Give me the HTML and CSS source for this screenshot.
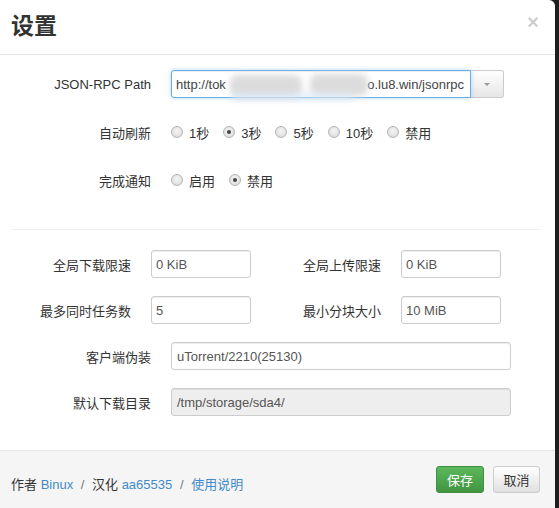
FILE: index.html
```html
<!DOCTYPE html>
<html lang="zh">
<head>
<meta charset="utf-8">
<title>设置</title>
<link rel="stylesheet" href="styles.css">
</head>
<body>
<div class="modal">
  <div class="modal-header">
    <h3 class="title">设置</h3>
    <span class="close">×</span>
  </div>
  <div class="modal-body">
    <div class="row">
      <label class="lbl">JSON-RPC Path</label>
      <div class="input-group">
        <div class="input rpc focused">
          <span>http://tok</span>
          <span>o.lu8.win/jsonrpc</span>
          <span class="blur b1"></span>
          <span class="blur b2"></span>
          <span class="glow"></span>
        </div>
        <div class="addon"><span class="caret"></span></div>
      </div>
    </div>
    <div class="row r-radio">
      <label class="lbl">自动刷新</label>
      <div class="radios">
        <span class="opt"><span class="radio"></span>1秒</span>
        <span class="opt"><span class="radio checked"></span>3秒</span>
        <span class="opt"><span class="radio"></span>5秒</span>
        <span class="opt"><span class="radio"></span>10秒</span>
        <span class="opt"><span class="radio"></span>禁用</span>
      </div>
    </div>
    <div class="row r-radio2">
      <label class="lbl">完成通知</label>
      <div class="radios">
        <span class="opt"><span class="radio"></span>启用</span>
        <span class="opt"><span class="radio checked"></span>禁用</span>
      </div>
    </div>
    <hr class="divider">
    <div class="row r-two">
      <label class="lbl lbl-s">全局下载限速</label>
      <div class="input small">0 KiB</div>
      <label class="lbl lbl-m">全局上传限速</label>
      <div class="input small">0 KiB</div>
    </div>
    <div class="row r-two">
      <label class="lbl lbl-s">最多同时任务数</label>
      <div class="input small">5</div>
      <label class="lbl lbl-m">最小分块大小</label>
      <div class="input small">10 MiB</div>
    </div>
    <div class="row r-two">
      <label class="lbl">客户端伪装</label>
      <div class="input wide">uTorrent/2210(25130)</div>
    </div>
    <div class="row r-two">
      <label class="lbl">默认下载目录</label>
      <div class="input wide disabled">/tmp/storage/sda4/</div>
    </div>
  </div>
  <div class="modal-footer">
    <div class="credits">作者 <a>Binux</a> <span class="sep">/</span> 汉化 <a>aa65535</a> <span class="sep">/</span> <a>使用说明</a></div>
    <div class="buttons">
      <button class="btn btn-success">保存</button>
      <button class="btn btn-default">取消</button>
    </div>
  </div>
</div>
</body>
</html>
```
FILE: styles.css
```css
html, body {
  margin: 0;
  padding: 0;
}
body {
  background: #1e1e1e;
  width: 559px;
  height: 508px;
  overflow: hidden;
  font-family: "Liberation Sans", "Noto Sans CJK SC", sans-serif;
  font-size: 13px;
  color: #333;
}
.modal {
  width: 555px;
  height: 508px;
  background: #fff;
  border-top-right-radius: 6px;
  overflow: hidden;
}
.modal-header {
  height: 54px;
  border-bottom: 1px solid #e5e5e5;
  display: flex;
  align-items: center;
  justify-content: space-between;
  padding: 0 16px 0 11px;
}
.title {
  margin: 0;
  font-size: 23px;
  font-weight: bold;
  line-height: 1;
  color: #333;
  padding-bottom: 1px;
}
.close {
  font-size: 20px;
  font-weight: bold;
  color: #000;
  opacity: 0.2;
  line-height: 1;
  margin-top: -10px;
}
.modal-body {
  height: 395px;
  padding-top: 15px;
  box-sizing: border-box;
}
.row {
  display: flex;
  align-items: center;
  height: 28px;
  margin-bottom: 20px;
}
.lbl {
  width: 151px;
  text-align: right;
  margin-right: 20px;
  flex: none;
}
.lbl-s {
  width: 131px;
}
.lbl-m {
  width: 130px;
}
.input {
  box-sizing: border-box;
  height: 28px;
  border: 1px solid #ccc;
  border-radius: 3px;
  box-shadow: inset 0 1px 1px rgba(0,0,0,0.075);
  padding: 0 4px;
  display: flex;
  align-items: center;
  color: #555;
  background: #fff;
  flex: none;
  white-space: nowrap;
}
.input-group {
  display: flex;
}
.rpc {
  width: 300px;
  border-radius: 3px 0 0 3px;
  justify-content: space-between;
  padding: 0 6px 0 4px;
  position: relative;
  color: #444;
}
.focused {
  border-color: #66afe9;
  box-shadow: inset 0 1px 1px rgba(0,0,0,.075), 0 0 4px rgba(102,175,233,.5);
}
.blur {
  position: absolute;
  background: #dcdcdc;
  filter: blur(3px);
  border-radius: 8px;
}
.b1 {
  left: 58px;
  top: 4px;
  width: 72px;
  height: 22px;
}
.b2 {
  left: 138px;
  top: 3px;
  width: 58px;
  height: 22px;
}
.glow {
  position: absolute;
  left: 60px;
  top: 21px;
  width: 120px;
  height: 9px;
  background: rgba(215,232,246,0.6);
  filter: blur(3px);
}
.addon {
  box-sizing: border-box;
  width: 33px;
  height: 28px;
  border: 1px solid #ccc;
  border-left: none;
  border-radius: 0 3px 3px 0;
  background: linear-gradient(#fff, #e6e6e6);
  display: flex;
  align-items: center;
  justify-content: center;
}
.caret {
  width: 0;
  height: 0;
  border-left: 3px solid transparent;
  border-right: 3px solid transparent;
  border-top: 3px solid #999;
}
.r-radio {
  margin-bottom: 20px;
}
.r-radio2 {
  margin-bottom: 0;
}
.radios {
  display: flex;
  gap: 14px;
}
.opt {
  display: flex;
  align-items: center;
  gap: 6px;
}
.radio {
  box-sizing: border-box;
  width: 12px;
  height: 12px;
  border-radius: 50%;
  border: 1px solid #b4b4b4;
  background: radial-gradient(circle at 50% 40%, #f4f4f4, #d8d8d8);
  display: flex;
  align-items: center;
  justify-content: center;
}
.radio.checked::after {
  content: "";
  width: 4px;
  height: 4px;
  border-radius: 50%;
  background: #444;
}
.divider {
  margin: 35px 15px 20px 11px;
  border: none;
  border-top: 1px solid #eee;
  height: 0;
}
.r-two {
  margin-bottom: 18px;
}
.small {
  width: 100px;
}
.wide {
  width: 340px;
  padding-left: 5px;
}
.disabled {
  background: #eee;
  color: #555;
}
.modal-footer {
  border-top: 1px solid #e5e5e5;
  background: #f5f5f5;
  height: 60px;
  display: flex;
  justify-content: space-between;
  align-items: flex-start;
  padding: 15px 15px 0 11px;
  box-sizing: border-box;
}
.credits {
  margin-top: 8px;
  color: #333;
}
.credits a {
  color: #428bca;
}
.sep {
  color: #777;
  margin: 0 4px;
}
.buttons {
  display: flex;
  gap: 9px;
}
.btn {
  font-family: "Liberation Sans", "Noto Sans CJK SC", sans-serif;
  font-size: 13px;
  height: 27px;
  border-radius: 3px;
  padding: 0;
  box-sizing: border-box;
  white-space: nowrap;
}
.btn-success {
  width: 48px;
  color: #fff;
  border: 1px solid #3e8f3e;
  background: linear-gradient(#5cb85c, #419641);
}
.btn-default {
  width: 47px;
  color: #333;
  border: 1px solid #ccc;
  background: linear-gradient(#fff, #e0e0e0);
}
```
